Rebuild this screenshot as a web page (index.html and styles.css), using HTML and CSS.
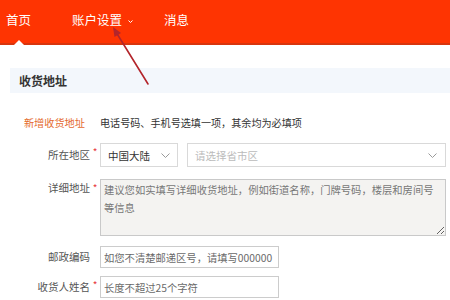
FILE: index.html
```html
<!DOCTYPE html>
<html lang="zh-CN">
<head>
<meta charset="utf-8">
<title>收货地址</title>
<link rel="stylesheet" href="styles.css">
</head>
<body>
<header class="topbar">
  <nav class="nav">
    <a class="nav-item nav-home active">首页</a>
    <a class="nav-item nav-account">账户设置<svg class="caret" width="5" height="3" viewBox="0 0 5 3"><path d="M0.5 0.5 L2.5 2.5 L4.5 0.5" fill="none" stroke="#fff" stroke-width="1"/></svg></a>
    <a class="nav-item nav-msg">消息</a>
  </nav>
</header>
<main class="content">
  <div class="section-bar"><h2 class="section-title">收货地址</h2></div>
  <form class="addr-form">
    <div class="row row-notice">
      <span class="label label-new">新增收货地址</span>
      <span class="notice">电话号码、手机号选填一项，其余均为必填项</span>
    </div>
    <div class="row row-region">
      <label class="label label-select">所在地区<i class="req">*</i></label>
      <div class="field-region">
        <div class="select select-country"><span>中国大陆</span><svg class="chev" width="9" height="5" viewBox="0 0 9 5"><path d="M0.5 0.5 L4.5 4.5 L8.5 0.5" fill="none" stroke="#9a9a9a" stroke-width="1"/></svg></div>
        <div class="select select-area"><span class="ph">请选择省市区</span><svg class="chev" width="9" height="5" viewBox="0 0 9 5"><path d="M0.5 0.5 L4.5 4.5 L8.5 0.5" fill="none" stroke="#9a9a9a" stroke-width="1"/></svg></div>
      </div>
    </div>
    <div class="row row-detail">
      <label class="label label-area">详细地址<i class="req">*</i></label>
      <textarea class="textarea" placeholder="建议您如实填写详细收货地址，例如街道名称，门牌号码，楼层和房间号等信息"></textarea>
    </div>
    <div class="row row-zip">
      <label class="label label-input">邮政编码<i class="req req-empty"></i></label>
      <input class="input" type="text" placeholder="如您不清楚邮递区号，请填写000000">
    </div>
    <div class="row row-name">
      <label class="label label-input">收货人姓名<i class="req">*</i></label>
      <input class="input" type="text" placeholder="长度不超过25个字符">
    </div>
  </form>
</main>
<svg class="annotation-arrow" width="450" height="300" viewBox="0 0 450 300">
  <line x1="148" y1="84" x2="117.5" y2="34.5" stroke="#b3252b" stroke-width="1.6" stroke-linecap="round"/>
  <polygon points="113,27 121,33 114.5,37" fill="#b3252b"/>
</svg>
</body>
</html>
```

FILE: styles.css
```css
* { box-sizing: border-box; }
html, body { margin: 0; padding: 0; }
body {
  width: 450px;
  height: 300px;
  overflow: hidden;
  background: #fff;
  font-family: "Noto Sans CJK SC", "Noto Sans", "Liberation Sans", sans-serif;
  position: relative;
  color: #333;
}

.topbar {
  height: 45px;
  background: #fe3402;
  border-bottom: 2px solid #d8350e;
}
.nav {
  display: flex;
  align-items: center;
  height: 43px;
  padding-left: 6px;
  padding-bottom: 3px;
}
.nav-item {
  color: #fff;
  font-size: 12.5px;
  line-height: 16px;
  text-decoration: none;
  display: flex;
  align-items: center;
  position: relative;
}
.nav-home { width: 66px; }
.nav-account { width: 92px; }
.caret { margin-left: 6px; margin-top: 2px; }
.nav-home.active::after {
  content: "";
  position: absolute;
  left: 8px;
  top: 28px;
  border-left: 5px solid transparent;
  border-right: 5px solid transparent;
  border-bottom: 5px solid #fff;
}

.content {
  margin-left: 10px;
  padding-top: 23px;
}
.section-bar {
  height: 25px;
  background: #f3f7fc;
  padding-left: 9px;
  display: flex;
  align-items: center;
}
.section-title {
  margin: 0;
  font-size: 12px;
  font-weight: bold;
  color: #333;
  line-height: 16px;
}

.addr-form {
  padding-top: 20px;
  font-size: 10.5px;
}
.row {
  display: grid;
  grid-template-columns: 90px 1fr;
  align-items: start;
}
.row-notice { height: 20px; align-items: center; }
.row-region { margin-top: 10px; }
.row-detail { margin-top: 12px; }
.row-zip { margin-top: 10px; }
.row-name { margin-top: 8px; }

.label {
  text-align: right;
  color: #555;
  white-space: nowrap;
}
.label-new {
  color: #e4692e;
  padding-right: 15px;
  line-height: 20px;
  font-size: 10.2px;
}
.notice {
  color: #333;
  font-size: 10.1px;
  line-height: 20px;
}
.label-select { line-height: 24px; }
.label-area { line-height: 18px; }
.label-input { line-height: 22px; }
.req {
  display: inline-block;
  width: 10px;
  text-align: center;
  font-style: normal;
  color: #e8383d;
  vertical-align: top;
  font-size: 10px;
  line-height: 18px;
}

.field-region {
  display: flex;
  gap: 9px;
}
.select {
  height: 24px;
  border: 1px solid #d9d9d9;
  background: #fff;
  display: flex;
  align-items: center;
  justify-content: space-between;
  padding: 0 7px 0 7px;
  color: #333;
}
.select-country { width: 78px; }
.select-area { width: 259px; padding-right: 8px; }
.select .ph { color: #bbb; }
.chev { flex: none; }

.textarea {
  display: block;
  width: 346px;
  height: 57px;
  border: 1px solid #c9c9c9;
  background: #f4f3f1;
  padding: 1px 3px;
  margin: 0;
  font-family: inherit;
  font-size: 10.3px;
  line-height: 18px;
  color: #333;
  resize: both;
}
.textarea::placeholder { color: #777; }

.input {
  display: block;
  width: 179px;
  height: 22px;
  border: 1px solid #ccc;
  background: #fff;
  padding: 0 3px;
  margin: 0;
  font-family: inherit;
  font-size: 10.3px;
  color: #333;
}
.input::placeholder { color: #6a6a6a; }

.annotation-arrow {
  position: absolute;
  left: 0;
  top: 0;
  pointer-events: none;
}
```
